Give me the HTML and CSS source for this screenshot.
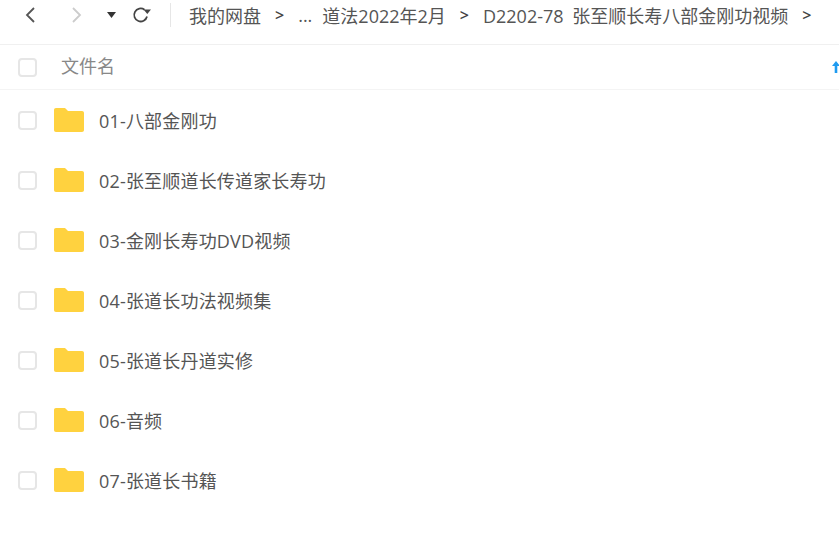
FILE: index.html
```html
<!DOCTYPE html>
<html lang="zh-CN">
<head>
    <meta charset="UTF-8">
    <title>我的网盘</title>
    <link rel="stylesheet" href="styles.css">
</head>
<body>

<div class="toolbar">
    <svg class="nav-icon back" viewBox="0 0 12 18"><path d="M10 2 3 9l7 7" fill="none" stroke="#555" stroke-width="1.800"/></svg>
    <svg class="nav-icon forward" viewBox="0 0 12 18"><path d="M2 2l7 7-7 7" fill="none" stroke="#ccc" stroke-width="1.800"/></svg>
    <svg class="caret" viewBox="0 0 9 6"><path d="M0 0h9L4.500 6z" fill="#333"/></svg>
    <svg class="refresh" viewBox="0 0 20 20"><path d="M16 11.500A6.500 6.500 0 1 1 13.500 4.700" fill="none" stroke="#444" stroke-width="1.800"/><path d="M12.500 4.500H20l-3.700 4.500z" fill="#444"/></svg>
    <div class="divider"></div>
    <div class="crumbs">
        <span>我的网盘</span><span class="sep">&gt;</span>
        <span>...</span>
        <span class="after-dots">道法2022年2月</span><span class="sep">&gt;</span>
        <span class="current">D2202-78 张至顺长寿八部金刚功视频</span><span class="sep">&gt;</span>
    </div>
</div>

<div class="list-head">
    <div class="check"></div>
    <span class="head-name">文件名</span>
    <svg class="sort" viewBox="0 0 8 12"><path d="M4 0 8 5H5.300v7H2.700V5H0z" fill="#1e9bf0"/></svg>
</div>

<div class="row">
    <div class="check"></div>
    <svg class="folder" viewBox="0 0 30 24"><path d="M2 0h8c1 0 1.600.4 2.300 1.200L14 3h14c1.200 0 2 .8 2 2v17c0 1.200-.8 2-2 2H2c-1.200 0-2-.8-2-2V2C0 .8.800 0 2 0z" fill="#ffd23f"/></svg>
    <span class="name">01-八部金刚功</span>
</div>
<div class="row">
    <div class="check"></div>
    <svg class="folder" viewBox="0 0 30 24"><path d="M2 0h8c1 0 1.600.4 2.300 1.200L14 3h14c1.200 0 2 .8 2 2v17c0 1.200-.8 2-2 2H2c-1.200 0-2-.8-2-2V2C0 .8.800 0 2 0z" fill="#ffd23f"/></svg>
    <span class="name">02-张至顺道长传道家长寿功</span>
</div>
<div class="row">
    <div class="check"></div>
    <svg class="folder" viewBox="0 0 30 24"><path d="M2 0h8c1 0 1.600.4 2.300 1.200L14 3h14c1.200 0 2 .8 2 2v17c0 1.200-.8 2-2 2H2c-1.200 0-2-.8-2-2V2C0 .8.800 0 2 0z" fill="#ffd23f"/></svg>
    <span class="name">03-金刚长寿功DVD视频</span>
</div>
<div class="row">
    <div class="check"></div>
    <svg class="folder" viewBox="0 0 30 24"><path d="M2 0h8c1 0 1.600.4 2.300 1.200L14 3h14c1.200 0 2 .8 2 2v17c0 1.200-.8 2-2 2H2c-1.200 0-2-.8-2-2V2C0 .8.800 0 2 0z" fill="#ffd23f"/></svg>
    <span class="name">04-张道长功法视频集</span>
</div>
<div class="row">
    <div class="check"></div>
    <svg class="folder" viewBox="0 0 30 24"><path d="M2 0h8c1 0 1.600.4 2.300 1.200L14 3h14c1.200 0 2 .8 2 2v17c0 1.200-.8 2-2 2H2c-1.200 0-2-.8-2-2V2C0 .8.800 0 2 0z" fill="#ffd23f"/></svg>
    <span class="name">05-张道长丹道实修</span>
</div>
<div class="row">
    <div class="check"></div>
    <svg class="folder" viewBox="0 0 30 24"><path d="M2 0h8c1 0 1.600.4 2.300 1.200L14 3h14c1.200 0 2 .8 2 2v17c0 1.200-.8 2-2 2H2c-1.200 0-2-.8-2-2V2C0 .8.800 0 2 0z" fill="#ffd23f"/></svg>
    <span class="name">06-音频</span>
</div>
<div class="row">
    <div class="check"></div>
    <svg class="folder" viewBox="0 0 30 24"><path d="M2 0h8c1 0 1.600.4 2.300 1.200L14 3h14c1.200 0 2 .8 2 2v17c0 1.200-.8 2-2 2H2c-1.200 0-2-.8-2-2V2C0 .8.800 0 2 0z" fill="#ffd23f"/></svg>
    <span class="name">07-张道长书籍</span>
</div>

</body>
</html>
```

FILE: styles.css
```css
body {
    margin: 0;
    width: 839px;
    height: 536px;
    overflow: hidden;
    background: #fff;
    font-family: "Open Sans", "Noto Sans CJK SC", sans-serif;
    color: #555;
}

.toolbar {
    display: flex;
    align-items: center;
    height: 30px;
    padding: 0 0 14px 24px;
    border-bottom: 1px solid #f0f0f0;
    white-space: nowrap;
}

.nav-icon {
    width: 12px;
    height: 18px;
    flex: none;
}

.forward {
    margin-left: 35px;
}

.caret {
    width: 9px;
    height: 6px;
    margin-left: 24px;
    flex: none;
}

.refresh {
    width: 20px;
    height: 20px;
    margin-left: 15px;
    flex: none;
}

.divider {
    width: 1px;
    height: 24px;
    margin-left: 19px;
    background: #e6e6e6;
    flex: none;
}

.crumbs {
    display: flex;
    align-items: center;
    gap: 14px;
    margin-left: 18px;
    font-size: 18px;
    color: #555;
}

.after-dots {
    margin-left: -4px;
}

.current {
    word-spacing: 4px;
}

.sep {
    color: #444;
    font-size: 16px;
    font-weight: 600;
}

.list-head {
    display: flex;
    align-items: center;
    height: 44px;
    padding-left: 18px;
    border-bottom: 1px solid #f4f4f4;
}

.head-name {
    margin-left: 24px;
    font-size: 18px;
    line-height: 42px;
    height: 44px;
    color: #888;
}

.sort {
    width: 8px;
    height: 12px;
    margin-left: auto;
    margin-right: -1px;
}

.check {
    width: 19px;
    height: 19px;
    border: 2px solid #e6e6e6;
    border-radius: 4px;
    box-sizing: border-box;
    flex: none;
}

.row {
    display: flex;
    align-items: center;
    height: 60px;
    padding-left: 18px;
}

.folder {
    width: 30px;
    height: 24px;
    margin-left: 17px;
    flex: none;
}

.name {
    margin-left: 15px;
    font-size: 18px;
    letter-spacing: 0.18px;
    color: #555;
}
```
